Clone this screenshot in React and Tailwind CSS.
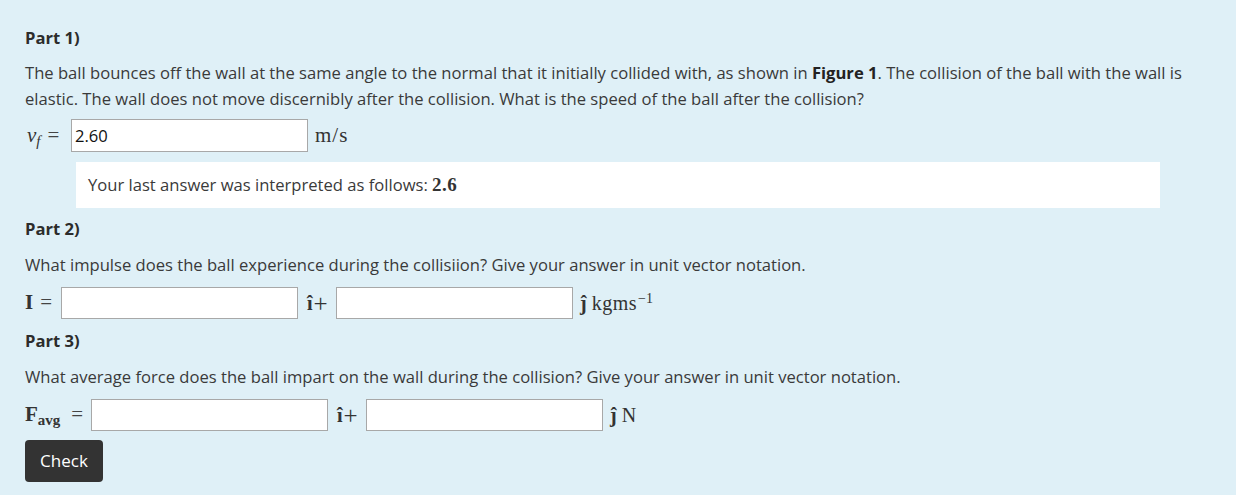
import React from "react";

const body = { fontFamily: '"Open Sans", "Noto Sans", sans-serif' };
const math = { fontFamily: '"Liberation Serif", "DejaVu Serif", serif' };

function Box({ value = "", h = "h-[33px]" }) {
  return (
    <input
      readOnly
      value={value}
      className={`w-[237px] shrink-0 ${h} border border-[#a8a8a8] bg-white px-[3px] text-[16.6px] text-[#111] outline-none`}
      style={body}
    />
  );
}

function Heading({ children, className = "" }) {
  return (
    <h4 className={`text-[16.6px] font-bold leading-[24px] text-[#2c2c2c] ${className}`}>{children}</h4>
  );
}

function Plus() {
  return (
    <span className="flex w-[38px] shrink-0 items-center pl-[9px] text-[20px] text-[#333]">
      <b>î</b>
      <span className="ml-[1px] text-[25px] font-light leading-none">+</span>
    </span>
  );
}

export default function App() {
  return (
    <div className="min-h-[495px] w-full bg-[#dff0f7] pl-[25px] pr-[25px] pt-[26px] text-[16.6px] text-[#3a3a3a]" style={body}>
      <Heading>Part 1)</Heading>
      <p className="mt-[10px] leading-[26px]">
        The ball bounces off the wall at the same angle to the normal that it initially collided with, as shown in{" "}
        <b className="text-[#222]">Figure 1</b>. The collision of the ball with the wall is elastic. The wall does not move
        discernibly after the collision. What is the speed of the ball after the collision?
      </p>

      <div className="mt-[7px] flex items-center" style={math}>
        <span className="flex w-[46px] shrink-0 items-center">
          <span className="ml-[2px] text-[21px] italic text-[#333]">
            v<sub className="text-[15px]">f</sub>
          </span>
          <span className="ml-[7px] text-[21px] text-[#444]">=</span>
        </span>
        <Box value="2.60" />
        <span className="ml-[7px] text-[21px] tracking-[1px] text-[#333]">m/s</span>
      </div>

      <div className="mx-[51px] mt-[10px] flex h-[46px] items-center bg-white px-[12px]">
        <span>
          Your last answer was interpreted as follows:{" "}
          <b className="text-[19px] tracking-[0.5px] text-[#333]" style={math}>2.6</b>
        </span>
      </div>

      <Heading className="mt-[9px]">Part 2)</Heading>
      <p className="mt-[11px] leading-[26px]">
        What impulse does the ball experience during the collisiion? Give your answer in unit vector notation.
      </p>
      <div className="mt-[9px] flex items-center" style={math}>
        <span className="flex w-[36px] shrink-0 items-center">
          <span className="text-[21px] font-bold text-[#333]">I</span>
          <span className="ml-[7px] text-[21px] text-[#444]">=</span>
        </span>
        <Box h="h-[32px]" />
        <Plus />
        <Box h="h-[32px]" />
        <span className="ml-[7px] text-[20px] text-[#333]">
          <b className="text-[20px]">ĵ</b> <span className="tracking-[0.5px]">kgms</span>
          <sup className="ml-[1px] text-[14px]">−1</sup>
        </span>
      </div>

      <Heading className="mt-[10px]">Part 3)</Heading>
      <p className="mt-[11px] leading-[26px]">
        What average force does the ball impart on the wall during the collision? Give your answer in unit vector notation.
      </p>
      <div className="mt-[9px] flex items-center" style={math}>
        <span className="flex w-[66px] shrink-0 items-center">
          <span className="text-[21px] font-bold text-[#333]">
            F<sub className="text-[15px]">avg</sub>
          </span>
          <span className="ml-[11px] text-[21px] text-[#444]">=</span>
        </span>
        <Box h="h-[32px]" />
        <Plus />
        <Box h="h-[32px]" />
        <span className="ml-[7px] text-[20px] text-[#333]">
          <b>ĵ</b> N
        </span>
      </div>

      <button className="mt-[9px] h-[42px] w-[78px] rounded-[4px] bg-[#333] text-[17px] text-white">Check</button>
    </div>
  );
}
